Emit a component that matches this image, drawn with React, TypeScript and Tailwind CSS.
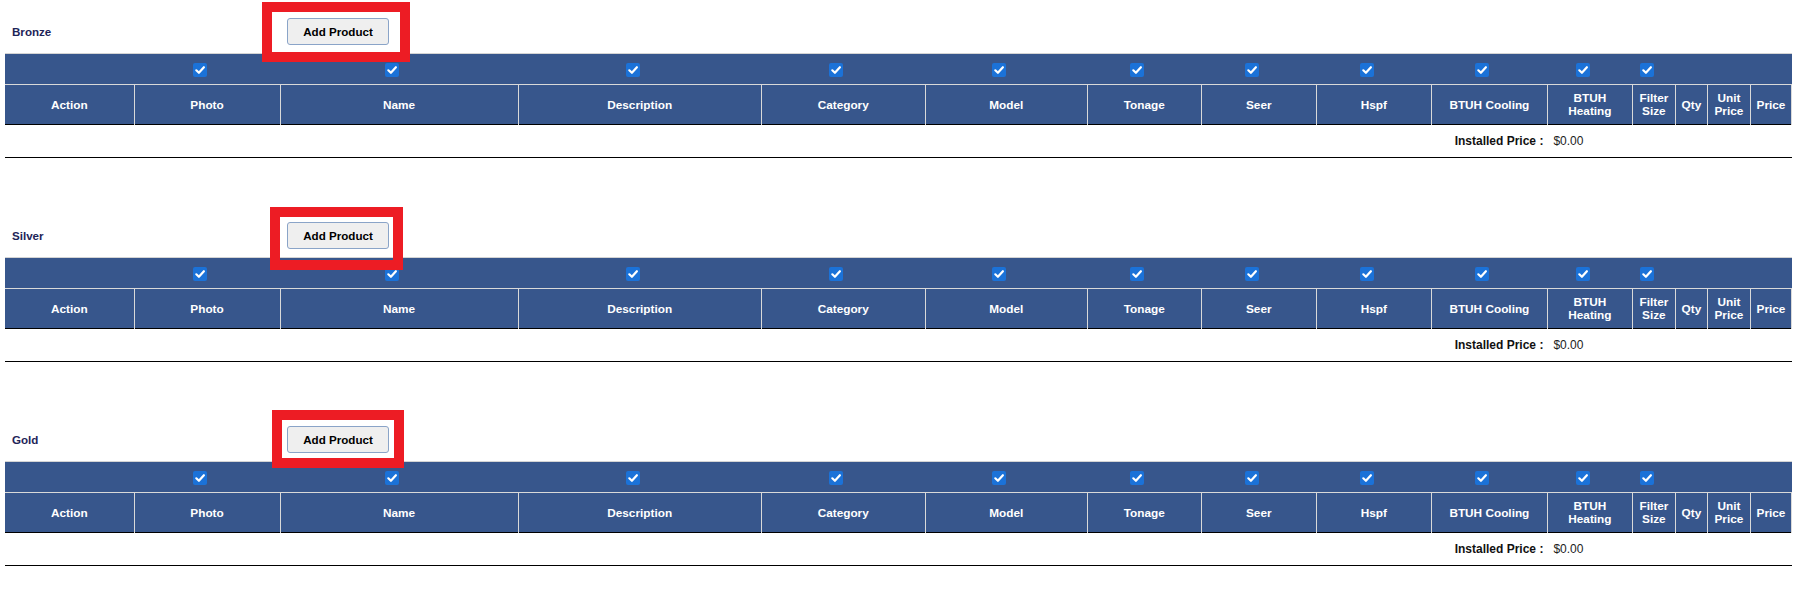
type Column = {
  label: React.ReactNode;
  w: string;
  check: boolean;
};

const columns: Column[] = [
  { label: "Action", w: "w-[129px]", check: false },
  { label: "Photo", w: "w-[146px]", check: true },
  { label: "Name", w: "w-[238px]", check: true },
  { label: "Description", w: "w-[243px]", check: true },
  { label: "Category", w: "w-[164px]", check: true },
  { label: "Model", w: "w-[162px]", check: true },
  { label: "Tonage", w: "w-[114px]", check: true },
  { label: "Seer", w: "w-[115px]", check: true },
  { label: "Hspf", w: "w-[115px]", check: true },
  { label: "BTUH Cooling", w: "w-[116px]", check: true },
  { label: <>BTUH<br />Heating</>, w: "w-[85px]", check: true },
  { label: <>Filter<br />Size</>, w: "w-[43px]", check: true },
  { label: "Qty", w: "w-[32px]", check: false },
  { label: <>Unit<br />Price</>, w: "w-[43px]", check: false },
  { label: "Price", w: "w-[41px]", check: false },
];

type Tier = {
  name: string;
  first?: boolean;
  mark: string;
};

const tiers: Tier[] = [
  { name: "Bronze", first: true, mark: "-left-[25px] -top-[16px] w-[148px] h-[60px]" },
  { name: "Silver", mark: "-left-[17px] -top-[15px] w-[133px] h-[63px]" },
  { name: "Gold", mark: "-left-[15px] -top-[16px] w-[132px] h-[58px]" },
];

function CheckMark() {
  return (
    <span
      role="checkbox"
      aria-checked="true"
      className="inline-flex items-center justify-center align-middle w-[14px] h-[14px] mr-[14px] mt-[1px] rounded-[2px] bg-[#1b72d8]"
    >
      <svg viewBox="0 0 14 14" className="w-[14px] h-[14px]">
        <path d="M3.3 7.3 L5.9 9.8 L10.9 4.2" fill="none" stroke="white" strokeWidth="2.2" strokeLinecap="round" strokeLinejoin="round" />
      </svg>
    </span>
  );
}

function TierSection({ tier }: { tier: Tier }) {
  return (
    <div className={tier.first ? "pt-[18px]" : "mt-[64px]"}>
      <div className="flex items-center h-[27px]">
        <div className="w-[282px] pl-[7px] text-[11.6px] font-bold text-[#1e2458]">
          {tier.name}
        </div>
        <div className="relative">
          <button className="w-[102px] h-[27px] rounded-[3px] border border-[#8aa4c8] bg-[#efefef] text-[11.6px] font-bold text-black">
            Add Product
          </button>
          <div
            className={`absolute z-10 border-[10px] border-[#ed1c24] pointer-events-none ${tier.mark}`}
          />
        </div>
      </div>

      <table className="mt-[8px] w-[1787px] table-fixed border-collapse">
        <colgroup>
          {columns.map((c, i) => (
            <col key={i} className={c.w} />
          ))}
        </colgroup>
        <thead>
          <tr className="h-[31px] bg-[#37568c] border-t border-[#d4d4d4]">
            {columns.map((c, i) => (
              <td key={i} className="p-0 text-center align-middle leading-none">
                {c.check && <CheckMark />}
              </td>
            ))}
          </tr>
          <tr className="h-[40px] bg-[#37568c] border-t border-[#d9d9d9] border-b border-b-black">
            {columns.map((c, i) => (
              <th
                key={i}
                className={`p-0 pt-[1px] text-center align-middle text-white font-bold text-[11.8px] leading-[13px] ${
                  i > 0 ? "border-l border-[#d9d9d9]" : ""
                } ${i === columns.length - 1 ? "border-r border-[#d9d9d9]" : ""}`}
              >
                {c.label}
              </th>
            ))}
          </tr>
        </thead>
        <tbody>
          <tr className="h-[33px] border-b border-black">
            <td colSpan={10} className="p-0 pr-[4px] text-right text-[12px] font-semibold text-[#111]">
              Installed Price :
            </td>
            <td colSpan={5} className="p-0 pl-[6px] text-left text-[12px] text-[#222]">
              $0.00
            </td>
          </tr>
        </tbody>
      </table>
    </div>
  );
}

export default function App() {
  return (
    <div
      className="w-[1811px] h-[615px] bg-white px-[5px]"
      style={{ fontFamily: '"Liberation Sans", Arial, sans-serif' }}
    >
      {tiers.map((t) => (
        <TierSection key={t.name} tier={t} />
      ))}
    </div>
  );
}
